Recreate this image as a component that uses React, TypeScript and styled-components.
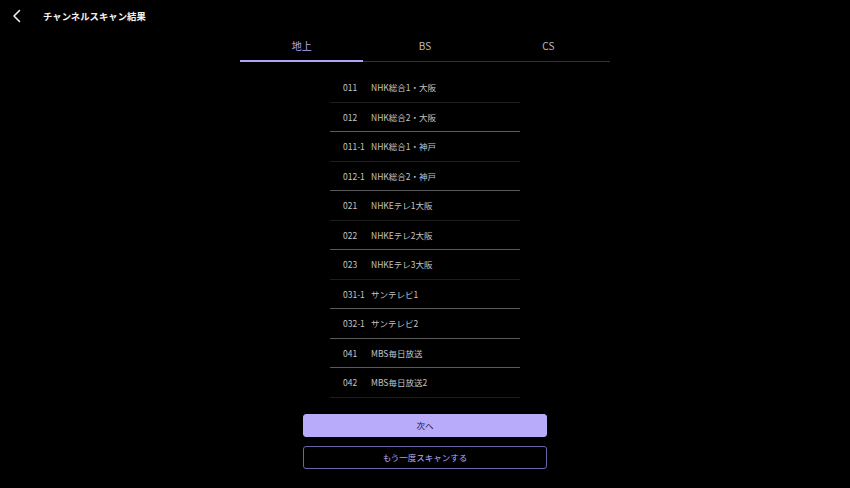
import { useState } from 'react'
import styled, { createGlobalStyle } from 'styled-components'

const GlobalStyle = createGlobalStyle`
  html, body {
    margin: 0;
    padding: 0;
    background: #000;
  }
  body {
    font-family: 'Noto Sans CJK JP', 'Noto Sans', sans-serif;
    color: #fff;
  }
`

const Page = styled.div`
  width: 850px;
  height: 488px;
  background: #000;
  display: flex;
  flex-direction: column;
  overflow: hidden;
`

const Header = styled.header`
  display: flex;
  align-items: center;
  height: 32px;
  padding-left: 10px;
`

const BackButton = styled.button`
  display: flex;
  align-items: center;
  justify-content: center;
  width: 14px;
  height: 20px;
  padding: 0;
  border: none;
  background: none;
  color: #eee;
  margin-right: 19px;
`

const Title = styled.h1`
  margin: 0 0 1px;
  font-size: 9.4px;
  font-weight: 700;
  color: #f2f2f2;
`

const Tabs = styled.div`
  display: flex;
  width: 370px;
  margin: 0 auto;
  border-bottom: 1px solid #333;
`

const Tab = styled.button<{ $active: boolean }>`
  flex: 1;
  height: 30px;
  padding: 0 0 2px;
  border: none;
  border-bottom: 2px solid ${(p) => (p.$active ? '#b3a5f5' : 'transparent')};
  margin-bottom: -1px;
  background: none;
  font-family: inherit;
  font-size: 10px;
  color: ${(p) => (p.$active ? '#b3a5f5' : '#bdbdbd')};
`

const List = styled.ul`
  list-style: none;
  width: 190px;
  margin: 11px auto 0;
  padding: 0;
`

const Row = styled.li<{ $light: boolean }>`
  display: flex;
  align-items: center;
  height: 28.5px;
  padding-left: 13px;
  border-bottom: 1px solid ${(p) => (p.$light ? '#5a5a5a' : '#1c1c1c')};
  font-size: 8.5px;
  color: #c4c4c4;
`

const Code = styled.span`
  width: 28px;
  flex-shrink: 0;
`

const Name = styled.span``

const Actions = styled.div`
  display: flex;
  flex-direction: column;
  gap: 9px;
  width: 244px;
  margin: 16px auto 0;
`

const ActionButton = styled.button<{ $primary?: boolean }>`
  height: 23px;
  border-radius: 3px;
  font-family: inherit;
  font-size: 8.5px;
  border: 1px solid ${(p) => (p.$primary ? '#b8acfa' : '#6c62a6')};
  background: ${(p) => (p.$primary ? '#b8acfa' : '#000')};
  color: ${(p) => (p.$primary ? '#1a1530' : '#b8acfa')};
`

const channels = [
  { code: '011', name: 'NHK総合1・大阪', light: false },
  { code: '012', name: 'NHK総合2・大阪', light: true },
  { code: '011-1', name: 'NHK総合1・神戸', light: false },
  { code: '012-1', name: 'NHK総合2・神戸', light: true },
  { code: '021', name: 'NHKEテレ1大阪', light: false },
  { code: '022', name: 'NHKEテレ2大阪', light: true },
  { code: '023', name: 'NHKEテレ3大阪', light: false },
  { code: '031-1', name: 'サンテレビ1', light: true },
  { code: '032-1', name: 'サンテレビ2', light: true },
  { code: '041', name: 'MBS毎日放送', light: true },
  { code: '042', name: 'MBS毎日放送2', light: false },
]

const tabs = ['地上', 'BS', 'CS']

const App = () => {
  const [tab, setTab] = useState('地上')

  return (
    <>
      <GlobalStyle />
      <Page>
        <Header>
          <BackButton aria-label='戻る'>
            <svg width='10' height='14' viewBox='0 0 10 14' fill='none'>
              <path d='M7.5 1.5 L2 7 L7.5 12.5' stroke='currentColor' strokeWidth='1.6' strokeLinecap='round' strokeLinejoin='round' />
            </svg>
          </BackButton>
          <Title>チャンネルスキャン結果</Title>
        </Header>
        <Tabs>
          {tabs.map((t) => (
            <Tab key={t} $active={t == tab} onClick={() => setTab(t)}>
              {t}
            </Tab>
          ))}
        </Tabs>
        <List>
          {channels.map((c) => (
            <Row key={c.code} $light={c.light}>
              <Code>{c.code}</Code>
              <Name>{c.name}</Name>
            </Row>
          ))}
        </List>
        <Actions>
          <ActionButton $primary>次へ</ActionButton>
          <ActionButton>もう一度スキャンする</ActionButton>
        </Actions>
      </Page>
    </>
  )
}

export default App
